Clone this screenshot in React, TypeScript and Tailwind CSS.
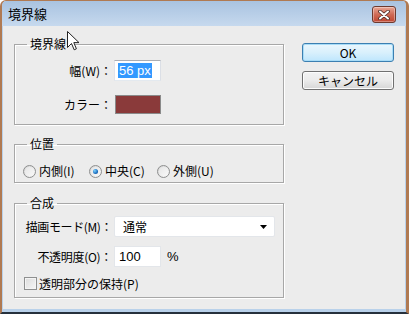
import React from 'react';

const Radio: React.FC<{ checked?: boolean }> = ({ checked }) => (
  <span className="relative inline-flex h-[13px] w-[13px] shrink-0 items-center justify-center rounded-full border border-[#8e8f8f] bg-gradient-to-br from-[#d4d4d4] to-[#fbfbfb]">
    <span className="h-[9px] w-[9px] rounded-full bg-gradient-to-br from-[#e6e6e6] to-[#f8f8f8]" />
    {checked && (
      <span className="absolute left-[3px] top-[3px] h-[5px] w-[5px] rounded-full bg-[radial-gradient(circle_at_35%_35%,#7fd3ff,#1b6fc0_60%,#0c3f86)]" />
    )}
  </span>
);

const Fieldset: React.FC<{ title: string; className?: string; children: React.ReactNode }> = ({
  title,
  className,
  children,
}) => (
  <fieldset
    className={`w-[270px] border border-[#a7a7a7] shadow-[inset_1px_1px_0_#fff,1px_1px_0_#fff] ${className ?? ''}`}
  >
    <legend className="ml-[12px] h-[14px] px-[3px] text-[12px] leading-[14px]">{title}</legend>
    {children}
  </fieldset>
);

const App: React.FC = () => {
  return (
    <div className="relative flex h-[314px] w-[409px] flex-col overflow-hidden rounded-t-[6px] border-t border-l-2 border-r-[3px] border-b-2 border-t-[#b07a52] border-l-[#b07a52] border-r-[#b07a52] border-b-[#26313d] bg-[#b9d1ea] font-['Noto_Sans_CJK_JP','Liberation_Sans',sans-serif] text-black">
      {/* title bar */}
      <div className="flex h-[25px] shrink-0 items-start bg-gradient-to-b from-[#a9c3e0] to-[#c6d9ee] pl-[6px] pr-[10px]">
        <span className="mt-[5px] text-[13px] leading-[15px]">境界線</span>
        <button className="ml-auto mt-[5px] flex h-[17px] w-[24px] items-center justify-center rounded-[3px] border border-[#6e3a2e] bg-gradient-to-b from-[#e8a796] via-[#cf6a55] to-[#c0452f] shadow-[inset_0_0_0_1px_rgba(255,255,255,0.35)]">
          <svg width="12" height="10" viewBox="0 0 12 10">
            <path d="M2 1.5 L10 8.5 M10 1.5 L2 8.5" stroke="#4a2a24" strokeWidth="3.6" strokeLinecap="round" />
            <path d="M2 1.5 L10 8.5 M10 1.5 L2 8.5" stroke="#fff" strokeWidth="2" strokeLinecap="round" />
          </svg>
        </button>
      </div>

      {/* client area */}
      <div className="mx-[1px] mb-[3px] flex flex-1 bg-[#ececec] text-[12px] leading-[16px]">
        <div className="flex flex-col pl-[11px] pt-[11px]">
          <Fieldset title="境界線">
            <div className="pb-[10px] pt-[9px]">
              <div className="flex h-[21px] items-center">
                <span className="w-[97px] text-right">幅(W)：</span>
                <div className="ml-[2px] flex h-[21px] w-[47px] items-center border border-[#abadb3] border-b-[#e3e9ef] border-l-[#e2e3ea] border-r-[#dbdfe6] bg-white pl-[3px]">
                  <span className="bg-[#3399ff] px-[1px] font-['Liberation_Sans',sans-serif] text-[13px] leading-[15px] text-white">
                    56 px
                  </span>
                </div>
              </div>
              <div className="mt-[14px] flex h-[19px] items-center">
                <span className="w-[97px] text-right">カラー：</span>
                <div className="ml-[3px] h-[19px] w-[46px] border border-[#8a8a8a] bg-[#8a3a3a]" />
              </div>
            </div>
          </Fieldset>

          <Fieldset title="位置" className="mt-[12px]">
            <div className="mb-[3px] mt-[12px] flex h-[16px] items-center pl-[8px]">
              <label className="flex w-[66px] items-center">
                <Radio />
                <span className="ml-[3px]">内側(I)</span>
              </label>
              <label className="flex w-[68px] items-center">
                <Radio checked />
                <span className="ml-[3px]">中央(C)</span>
              </label>
              <label className="flex items-center">
                <Radio />
                <span className="ml-[3px]">外側(U)</span>
              </label>
            </div>
          </Fieldset>

          <Fieldset title="合成" className="mt-[13px]">
            <div className="pb-[7px] pt-[6px]">
              <div className="flex h-[21px] items-center">
                <span className="w-[97px] text-right tracking-[-0.4px]">描画モード(M)：</span>
                <div className="ml-[2px] flex h-[21px] w-[161px] items-center rounded-[2px] border border-[#e3e6ea] bg-white pl-[8px] pr-[7px]">
                  <span>通常</span>
                  <svg className="ml-auto" width="7" height="4" viewBox="0 0 7 4">
                    <path d="M0 0 H7 L3.5 4 Z" fill="#000" />
                  </svg>
                </div>
              </div>
              <div className="mt-[9px] flex h-[21px] items-center">
                <span className="w-[97px] text-right tracking-[-0.3px]">不透明度(O)：</span>
                <div className="ml-[2px] flex h-[21px] w-[47px] items-center border border-[#e3e6ea] bg-white pl-[4px] font-['Liberation_Sans',sans-serif] text-[13px]">
                  100
                </div>
                <span className="ml-[6px] font-['Liberation_Sans',sans-serif] text-[13px]">%</span>
              </div>
              <div className="mt-[10px] flex h-[13px] items-center pl-[9px]">
                <span className="h-[13px] w-[13px] border border-[#8e8f8f] bg-gradient-to-br from-[#dcdcdc] to-[#f6f6f6] shadow-[inset_0_0_0_1px_#f4f4f4]" />
                <span className="ml-[2px]">透明部分の保持(P)</span>
              </div>
            </div>
          </Fieldset>
        </div>

        <div className="ml-[18px] flex flex-col pt-[17px]">
          <button className="flex h-[19px] w-[92px] items-center justify-center rounded-[3px] border border-[#3c7fb1] bg-gradient-to-b from-[#eaf6fd] via-[#d9f0fc] to-[#bee6fd] shadow-[inset_0_0_0_1px_#a8dcf7]">
            OK
          </button>
          <button className="mt-[9px] flex h-[19px] w-[92px] items-center justify-center rounded-[3px] border border-[#707070] bg-gradient-to-b from-[#f2f2f2] via-[#ebebeb] to-[#d6d6d6] shadow-[inset_0_0_0_1px_#fcfcfc]">
            キャンセル
          </button>
        </div>
      </div>

      {/* mouse pointer */}
      <svg className="absolute left-[65px] top-[30px]" width="13" height="20" viewBox="0 0 13 20">
        <path d="M0.5 0.5 L0.5 16.5 L4.5 12.5 L7.2 18.8 L9.4 17.8 L6.8 11.6 L12 11.6 Z" fill="#fff" stroke="#222" strokeWidth="1" strokeLinejoin="round" />
      </svg>
    </div>
  );
};

export default App;
